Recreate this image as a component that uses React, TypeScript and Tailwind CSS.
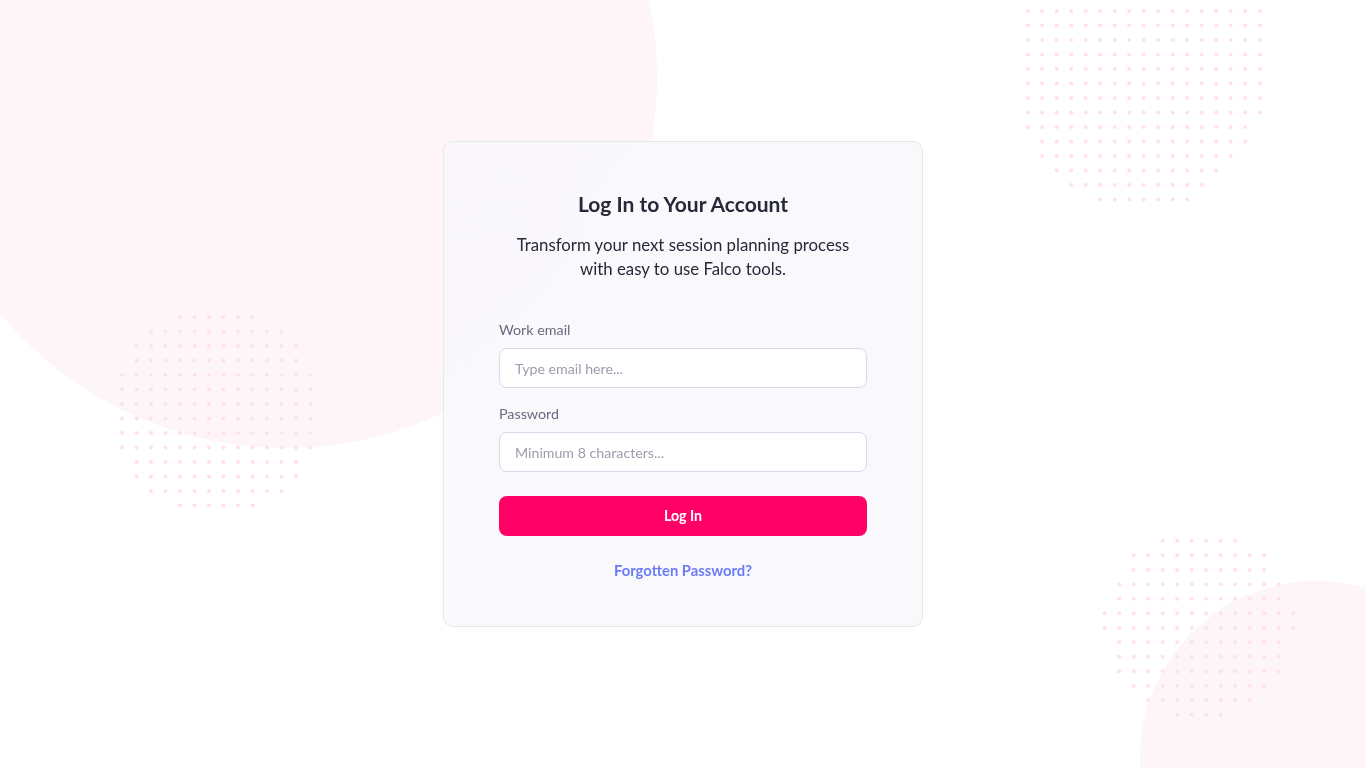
import React from "react";

type Cluster = { x0: number; y0: number; rows: [number, number][] };

const STEP = 14.5;

const clusters: Cluster[] = [
  {
    x0: 122,
    y0: 317,
    rows: [
      [4, 9], [2, 11], [1, 12], [1, 12],
      [0, 13], [0, 13], [0, 13], [0, 13], [0, 13], [0, 13],
      [1, 12], [1, 12], [2, 11], [4, 9],
    ],
  },
  {
    x0: 1027.7,
    y0: 11,
    rows: [
      [0, 16], [0, 16], [0, 16], [0, 16], [0, 16], [0, 16], [0, 16],
      [0, 16], [0, 15], [1, 15], [1, 14], [2, 13], [3, 12], [5, 11],
    ],
  },
  {
    x0: 1104.7,
    y0: 540.7,
    rows: [
      [4, 9], [2, 11], [2, 11], [1, 12], [1, 12], [0, 13], [0, 13],
      [1, 12], [1, 12], [1, 12], [2, 11], [3, 10], [5, 8],
    ],
  },
];

function Dots() {
  const dots: React.ReactNode[] = [];
  clusters.forEach((c, ci) => {
    c.rows.forEach(([a, b], ri) => {
      for (let i = a; i <= b; i++) {
        dots.push(
          <circle
            key={`${ci}-${ri}-${i}`}
            cx={c.x0 + i * STEP}
            cy={c.y0 + ri * STEP}
            r={2}
            fill="#ffe1eb"
          />
        );
      }
    });
  });
  return (
    <svg
      className="absolute inset-0 pointer-events-none"
      width={1366}
      height={768}
      viewBox="0 0 1366 768"
    >
      {dots}
    </svg>
  );
}

export default function App() {
  return (
    <div
      className="relative min-h-screen w-full overflow-hidden bg-white"
      style={{ fontFamily: "Lato, 'Noto Sans', sans-serif" }}
    >
      <div className="absolute left-[-85px] top-[-294px] w-[742px] h-[742px] rounded-full bg-[#fdf5f8]" />
      <div className="absolute left-[1140px] top-[581px] w-[354px] h-[354px] rounded-full bg-[#fdf5f8]" />
      <Dots />

      <div className="relative flex min-h-screen items-center justify-center">
        <div className="w-[480px] rounded-[10px] border border-[#e7e7ed] bg-[#f8f8fb]/80 backdrop-blur-[40px] px-[55px] pt-12 pb-[46px]">
          <h1 className="text-center text-[21px] leading-7 font-bold text-[#272838]">
            Log In to Your Account
          </h1>
          <p className="mt-[15px] text-center text-[16.8px] leading-6 text-[#272838]">
            Transform your next session planning process
            <br />
            with easy to use Falco tools.
          </p>

          <label className="mt-[39px] block text-[14.3px] leading-5 text-[#6a6a7e]">
            Work email
          </label>
          <input
            type="email"
            placeholder="Type email here..."
            className="mt-2 block h-10 w-full rounded-lg border border-[#d9d7e8] bg-white px-[15px] text-[14.2px] text-[#272838] placeholder:text-[#9d9cae] outline-none"
          />

          <label className="mt-4 block text-[14.3px] leading-5 text-[#6a6a7e]">
            Password
          </label>
          <input
            type="password"
            placeholder="Minimum 8 characters..."
            className="mt-2 block h-10 w-full rounded-lg border border-[#d9d7e8] bg-white px-[15px] text-[14.2px] text-[#272838] placeholder:text-[#9d9cae] outline-none"
          />

          <button className="mt-6 block h-10 w-full rounded-lg bg-[#ff0066] text-[14.2px] leading-5 font-bold text-white">
            Log In
          </button>

          <div className="mt-6 text-center text-[14.8px] leading-5 font-bold text-[#6c7cf6]">
            Forgotten Password?
          </div>
        </div>
      </div>
    </div>
  );
}
